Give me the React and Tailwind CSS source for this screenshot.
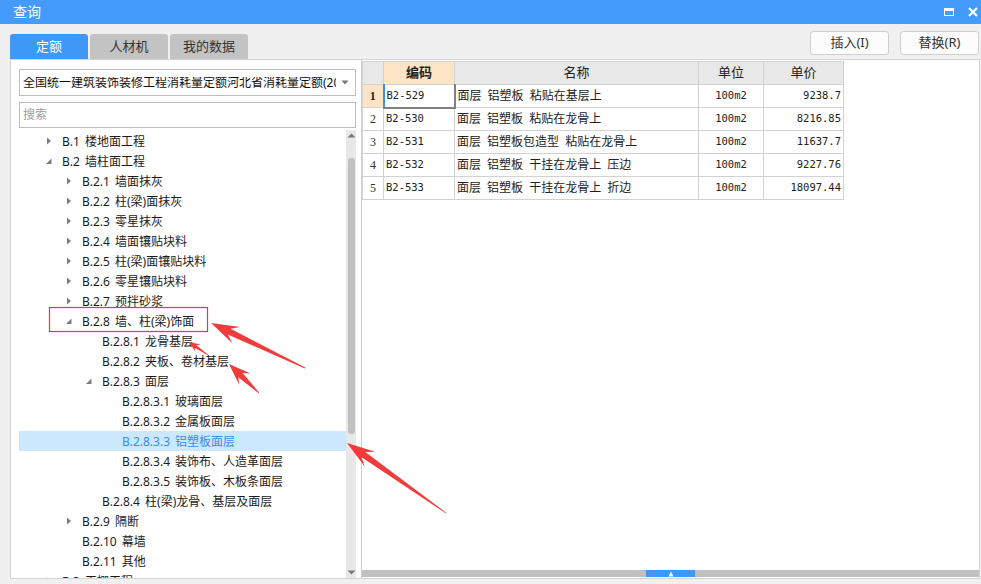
import React from "react";

const cjk = "font-['Noto_Sans','Noto_Sans_CJK_SC',sans-serif]";
const mono = "font-['DejaVu_Sans_Mono','Noto_Sans_CJK_SC',monospace]";

const indent = ["pl-[23px]", "pl-[43px]", "pl-[63px]", "pl-[83px]"];

const tree = [
  { l: 0, t: "B.1 楼地面工程", a: "c" },
  { l: 0, t: "B.2 墙柱面工程", a: "e" },
  { l: 1, t: "B.2.1 墙面抹灰", a: "c" },
  { l: 1, t: "B.2.2 柱(梁)面抹灰", a: "c" },
  { l: 1, t: "B.2.3 零星抹灰", a: "c" },
  { l: 1, t: "B.2.4 墙面镶贴块料", a: "c" },
  { l: 1, t: "B.2.5 柱(梁)面镶贴块料", a: "c" },
  { l: 1, t: "B.2.6 零星镶贴块料", a: "c" },
  { l: 1, t: "B.2.7 预拌砂浆", a: "c" },
  { l: 1, t: "B.2.8 墙、柱(梁)饰面", a: "e" },
  { l: 2, t: "B.2.8.1 龙骨基层" },
  { l: 2, t: "B.2.8.2 夹板、卷材基层" },
  { l: 2, t: "B.2.8.3 面层", a: "e" },
  { l: 3, t: "B.2.8.3.1 玻璃面层" },
  { l: 3, t: "B.2.8.3.2 金属板面层" },
  { l: 3, t: "B.2.8.3.3 铝塑板面层", sel: true },
  { l: 3, t: "B.2.8.3.4 装饰布、人造革面层" },
  { l: 3, t: "B.2.8.3.5 装饰板、木板条面层" },
  { l: 2, t: "B.2.8.4 柱(梁)龙骨、基层及面层" },
  { l: 1, t: "B.2.9 隔断", a: "c" },
  { l: 1, t: "B.2.10 幕墙" },
  { l: 1, t: "B.2.11 其他" },
  { l: 0, t: "B.3 天棚工程", a: "c" },
];

const rows = [
  ["B2-529", "面层 铝塑板 粘贴在基层上", "100m2", "9238.7"],
  ["B2-530", "面层 铝塑板 粘贴在龙骨上", "100m2", "8216.85"],
  ["B2-531", "面层 铝塑板包造型 粘贴在龙骨上", "100m2", "11637.7"],
  ["B2-532", "面层 铝塑板 干挂在龙骨上 压边", "100m2", "9227.76"],
  ["B2-533", "面层 铝塑板 干挂在龙骨上 折边", "100m2", "18097.44"],
];

// arrow polygon from tail to tip
const arrow = (tx, ty, px, py, L, W, w) => {
  const dx = px - tx;
  const dy = py - ty;
  const len = Math.hypot(dx, dy);
  const ux = dx / len;
  const uy = dy / len;
  const nx = -uy;
  const ny = ux;
  const bx = px - ux * L;
  const by = py - uy * L;
  const jx = px - ux * L * 0.72;
  const jy = py - uy * L * 0.72;
  const p = [
    [tx + nx * 0.4, ty + ny * 0.4],
    [jx + nx * w, jy + ny * w],
    [bx + nx * W, by + ny * W],
    [px, py],
    [bx - nx * W, by - ny * W],
    [jx - nx * w, jy - ny * w],
    [tx - nx * 0.4, ty - ny * 0.4],
  ];
  return p.map((q) => q[0].toFixed(1) + "," + q[1].toFixed(1)).join(" ");
};

const Caret = ({ a }) => {
  if (a === "c")
    return (
      <svg width="14" height="20" viewBox="0 0 14 20">
        <path d="M5 6.5 L9 10 L5 13.5 Z" fill="#7c7c7c" />
      </svg>
    );
  if (a === "e")
    return (
      <svg width="14" height="20" viewBox="0 0 14 20">
        <path d="M9.5 7.5 L9.5 13 L4 13 Z" fill="#7c7c7c" />
      </svg>
    );
  return <span className="w-[14px] shrink-0" />;
};

const App = () => {
  return (
    <div className={`relative w-[981px] h-[584px] bg-[#f0f0f0] flex flex-col overflow-hidden ${cjk}`}>
      {/* title bar */}
      <div className="h-[24px] bg-[#459bfb] flex items-center justify-between pl-[13px] pr-[3px]">
        <span className="text-white text-[14px] leading-none">查询</span>
        <div className="flex items-center gap-[14px]">
          <span className="w-[10px] h-[8px] border-white border-[1.5px] border-t-[3px]" />
          <svg width="10" height="10" viewBox="0 0 10 10">
            <path d="M1 1 L9 9 M9 1 L1 9" stroke="#fff" strokeWidth="2.2" />
          </svg>
        </div>
      </div>

      {/* tabs + buttons */}
      <div className="h-[35px] flex justify-between pl-[10px] pr-[2px]">
        <div className="flex items-end gap-[2px]">
          <div className="w-[78px] h-[25px] rounded-t-[3px] bg-[#3f97f7] text-white text-[13px] flex items-center justify-center">
            定额
          </div>
          <div className="w-[78px] h-[25px] rounded-t-[3px] bg-[#c3c3c3] text-[#333] text-[13px] flex items-center justify-center">
            人材机
          </div>
          <div className="w-[78px] h-[25px] rounded-t-[3px] bg-[#c3c3c3] text-[#333] text-[13px] flex items-center justify-center">
            我的数据
          </div>
        </div>
        <div className="flex items-start gap-[11px] pt-[7px]">
          <button className="w-[79px] h-[24px] bg-[#fcfcfc] border border-[#cfcfcf] rounded-[3px] text-[13px] text-[#333]">
            插入(I)
          </button>
          <button className="w-[79px] h-[24px] bg-[#fcfcfc] border border-[#cfcfcf] rounded-[3px] text-[13px] text-[#333]">
            替换(R)
          </button>
        </div>
      </div>

      {/* main area */}
      <div className="ml-[10px] mr-[1px] h-[520px] bg-white border border-[#d4d4d4] flex">
        {/* left panel */}
        <div className="w-[350px] flex flex-col pl-[8px] pr-[5px] pt-[9px]">
          <div className="h-[27px] border border-[#bdbdbd] flex items-center pl-[3px] pr-[6px] justify-between">
            <span className="w-[313px] overflow-hidden whitespace-nowrap text-[12px] text-[#111] leading-none">
              全国统一建筑装饰装修工程消耗量定额河北省消耗量定额(2019)
            </span>
            <svg width="8" height="5" viewBox="0 0 8 5">
              <path d="M0.5 0.5 L7.5 0.5 L4 4.5 Z" fill="#777" />
            </svg>
          </div>
          <div className="h-[26px] mt-[6px] border border-[#bdbdbd] flex items-center pl-[3px] text-[12px] text-[#a0a0a0]">
            搜索
          </div>
          <div className="flex-1 flex mt-[2px] min-h-0">
            <div className="flex-1 pt-[1px] overflow-hidden">
              {tree.map((n, i) => (
                <div
                  key={i}
                  className={`h-[20px] flex items-center ${indent[n.l]} ${
                    n.sel ? "bg-[#cce8ff] text-[#3a8ce6]" : "text-[#1b1b1b]"
                  }`}
                >
                  <Caret a={n.a} />
                  <span className="ml-[6px] pt-[1px] text-[12px] whitespace-nowrap leading-none [word-spacing:2px]">
                    {n.t}
                  </span>
                </div>
              ))}
            </div>
            <div className="w-[10px] bg-[#e8e8e8] flex flex-col items-center justify-between py-[3px]">
              <svg width="9" height="5" viewBox="0 0 9 5">
                <path d="M0.5 4.5 L4.5 0.5 L8.5 4.5 Z" fill="#7a7a7a" />
              </svg>
              <div className="flex-1 w-full flex flex-col pt-[20px] pb-[136px] px-[1.5px]">
                <div className="flex-1 bg-[#c1c1c1] rounded-[3px]" />
              </div>
              <svg width="9" height="5" viewBox="0 0 9 5">
                <path d="M0.5 0.5 L8.5 0.5 L4.5 4.5 Z" fill="#7a7a7a" />
              </svg>
            </div>
          </div>
        </div>

        {/* right panel */}
        <div className="flex-1 flex flex-col border-l border-[#cfcfcf] pt-[1px]">
          <div className="flex-1">
            <table className="border-collapse text-[12px]">
              <thead>
                <tr className="h-[23px]">
                  <th className="w-[21px] bg-[#e8e8e8] border border-[#d2d2d2]" />
                  <th className="w-[71px] bg-[#fde4c5] border border-[#d2d2d2] font-bold text-[13px] text-[#222]">编码</th>
                  <th className="w-[244px] bg-[#e8e8e8] border border-[#d2d2d2] font-normal text-[13px] text-[#222]">名称</th>
                  <th className="w-[65px] bg-[#e8e8e8] border border-[#d2d2d2] font-normal text-[13px] text-[#222]">单位</th>
                  <th className="w-[80px] bg-[#e8e8e8] border border-[#d2d2d2] font-normal text-[13px] text-[#222]">单价</th>
                </tr>
              </thead>
              <tbody>
                {rows.map((r, i) => (
                  <tr key={i} className="h-[23px]">
                    <td
                      className={`border border-[#d2d2d2] text-center text-[12px] font-['Liberation_Serif',serif] ${
                        i === 0 ? "bg-[#fde4c5] font-bold text-[#222]" : "text-[#333]"
                      }`}
                    >
                      {i + 1}
                    </td>
                    <td
                      className={`${mono} text-[10.5px] text-[#222] pl-[2px] ${
                        i === 0
                          ? "border-l-2 border-l-[#3c8fe8] border-r-2 border-r-[#808080] border-b-2 border-b-[#808080] border-t border-t-[#d2d2d2]"
                          : "border border-[#d2d2d2]"
                      }`}
                    >
                      {r[0]}
                    </td>
                    <td className="border border-[#d2d2d2] pl-[2px] text-[12px] text-[#222] whitespace-pre [word-spacing:3px]">
                      {r[1]}
                    </td>
                    <td className={`${mono} border border-[#d2d2d2] text-center text-[10.5px] text-[#222]`}>{r[2]}</td>
                    <td className={`${mono} border border-[#d2d2d2] text-right pr-[2px] text-[10.5px] text-[#222]`}>{r[3]}</td>
                  </tr>
                ))}
              </tbody>
            </table>
          </div>
          <div className="h-[7px] bg-[#c0c0c0] flex justify-start pl-[284px] mb-[1px]">
            <div className="w-[49px] h-full bg-[#3f97f7] flex items-center justify-center">
              <svg width="6" height="6" viewBox="0 0 6 6">
                <path d="M3 0.5 L5.5 5.5 L0.5 5.5 Z" fill="#fff" />
              </svg>
            </div>
          </div>
        </div>
      </div>

      {/* red annotations over the tree */}
      <svg className="absolute inset-0 pointer-events-none" width="981" height="584">
        <rect x="49.5" y="307.5" width="158" height="24" fill="none" stroke="#e23b3b" strokeWidth="1.2" />
        <polygon points={arrow(305, 368, 211, 323, 28, 9, 3.2)} fill="#f23b3b" />
        <polygon points={arrow(208, 355, 189, 342, 11, 4.5, 1.6)} fill="#f23b3b" />
        <polygon points={arrow(259, 393, 229, 364, 22, 8, 3)} fill="#f23b3b" />
        <polygon points={arrow(446, 513, 347, 443, 28, 9, 3.2)} fill="#f23b3b" />
      </svg>
    </div>
  );
};

export default App;
